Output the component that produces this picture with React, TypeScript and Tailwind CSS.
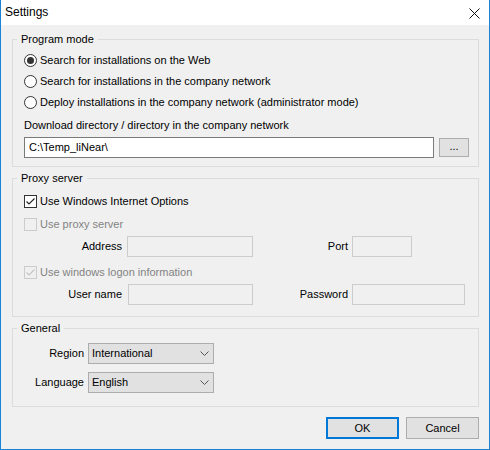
import type { ReactNode } from 'react';

/**
 * Settings dialog - Windows 10 style
 */

function Radio({ checked, label }: { checked?: boolean; label: string }) {
  return (
    <div className="flex h-[21px] items-center">
      <div className="flex h-[13px] w-[13px] items-center justify-center rounded-full border border-[#333333] bg-white">
        {checked && <div className="h-[7px] w-[7px] rounded-full bg-[#333333]" />}
      </div>
      <span className="ml-[3px]">{label}</span>
    </div>
  );
}

function Checkbox({
  checked,
  disabled,
  label,
}: {
  checked?: boolean;
  disabled?: boolean;
  label: string;
}) {
  return (
    <div className="flex h-[21px] items-center">
      <div
        className={
          disabled
            ? 'flex h-[13px] w-[13px] items-center justify-center border border-[#cccccc] bg-[#f0f0f0]'
            : 'flex h-[13px] w-[13px] items-center justify-center border border-[#333333] bg-white'
        }
      >
        {checked && (
          <svg width="11" height="11" viewBox="0 0 11 11">
            <polyline
              points="1.5,5.5 4,8 9.5,2.5"
              fill="none"
              stroke={disabled ? '#c4c4c4' : '#222222'}
              strokeWidth="1.1"
            />
          </svg>
        )}
      </div>
      <span className={disabled ? 'ml-[3px] text-[#838383]' : 'ml-[3px]'}>{label}</span>
    </div>
  );
}

function Group({ title, children, className }: { title: string; children: ReactNode; className: string }) {
  return (
    <fieldset className={`border border-[#dcdcdc] px-[4px] ${className}`}>
      <legend className="px-[4px] leading-[13px]">{title}</legend>
      <div className="pl-[7px] pr-[4px]">{children}</div>
    </fieldset>
  );
}

function DisabledField({ width }: { width: string }) {
  return <div className={`h-[21px] border border-[#cccccc] bg-[#f0f0f0] ${width}`} />;
}

function Combo({ value }: { value: string }) {
  return (
    <div className="flex h-[21px] w-[126px] items-center justify-between border border-[#adadad] bg-[#e1e1e1] pl-[3px] pr-[4px]">
      <span>{value}</span>
      <svg width="9" height="5" viewBox="0 0 9 5">
        <polyline points="0.5,0.5 4.5,4.5 8.5,0.5" fill="none" stroke="#555555" strokeWidth="1" />
      </svg>
    </div>
  );
}

export default function App() {
  return (
    <div className="flex h-[450px] w-[490px] flex-col border-x border-b border-[#1883d7] bg-[#f0f0f0] font-['Liberation_Sans',Arial,sans-serif] text-[11px] leading-[13px] text-black">
      {/* Title bar */}
      <div className="flex h-[25px] shrink-0 items-center justify-between bg-white pl-[4px] pr-[9px]">
        <span className="text-[12px]">Settings</span>
        <svg width="11" height="11" viewBox="0 0 11 11" className="mt-[2px]">
          <path d="M0.5 0.5 L10.5 10.5 M10.5 0.5 L0.5 10.5" stroke="#111111" strokeWidth="1" />
        </svg>
      </div>

      <div className="flex flex-col pl-[11px] pr-[10px]">
        {/* Program mode */}
        <Group title="Program mode" className="mt-[8px] pb-[8px]">
          <div className="pt-[4px]">
            <Radio checked label="Search for installations on the Web" />
            <Radio label="Search for installations in the company network" />
            <Radio label="Deploy installations in the company network (administrator mode)" />
          </div>
          <div className="mt-[2px] flex h-[20px] items-center">
            Download directory / directory in the company network
          </div>
          <div className="mt-[2px] flex items-center gap-[5px]">
            <div className="flex h-[21px] w-[410px] items-center border border-[#7a7a7a] bg-white pl-[4px]">
              C:\Temp_liNear\
            </div>
            <button className="flex h-[19px] w-[30px] items-center justify-center border border-[#adadad] bg-[#e1e1e1] pb-[3px]">
              ...
            </button>
          </div>
        </Group>

        {/* Proxy server */}
        <Group title="Proxy server" className="mt-[5px] pb-[11px]">
          <div className="pt-[6px]">
            <Checkbox checked label="Use Windows Internet Options" />
          </div>
          <div className="mt-[2px]">
            <Checkbox disabled label="Use proxy server" />
          </div>
          <div className="mt-[1px] flex items-center">
            <span className="w-[98px] text-right">Address</span>
            <div className="ml-[5px]">
              <DisabledField width="w-[126px]" />
            </div>
            <span className="w-[95px] text-right">Port</span>
            <div className="ml-[4px]">
              <DisabledField width="w-[60px]" />
            </div>
          </div>
          <div className="mt-[5px]">
            <Checkbox checked disabled label="Use windows logon information" />
          </div>
          <div className="mt-[1px] flex items-center">
            <span className="w-[98px] text-right">User name</span>
            <div className="ml-[6px]">
              <DisabledField width="w-[125px]" />
            </div>
            <span className="w-[95px] text-right">Password</span>
            <div className="ml-[4px]">
              <DisabledField width="w-[113px]" />
            </div>
          </div>
        </Group>

        {/* General */}
        <Group title="General" className="mt-[5px] pb-[13px]">
          <div className="flex items-center pt-[8px]">
            <span className="w-[60px] text-right">Region</span>
            <div className="ml-[4px]">
              <Combo value="International" />
            </div>
          </div>
          <div className="mt-[8px] flex items-center">
            <span className="w-[60px] text-right">Language</span>
            <div className="ml-[4px]">
              <Combo value="English" />
            </div>
          </div>
        </Group>

        {/* Actions */}
        <div className="mt-[10px] flex justify-end gap-[7px]">
          <button className="h-[22px] w-[73px] border-2 border-[#0078d7] bg-[#e1e1e1]">OK</button>
          <button className="h-[22px] w-[73px] border border-[#adadad] bg-[#e1e1e1]">Cancel</button>
        </div>
      </div>
    </div>
  );
}
